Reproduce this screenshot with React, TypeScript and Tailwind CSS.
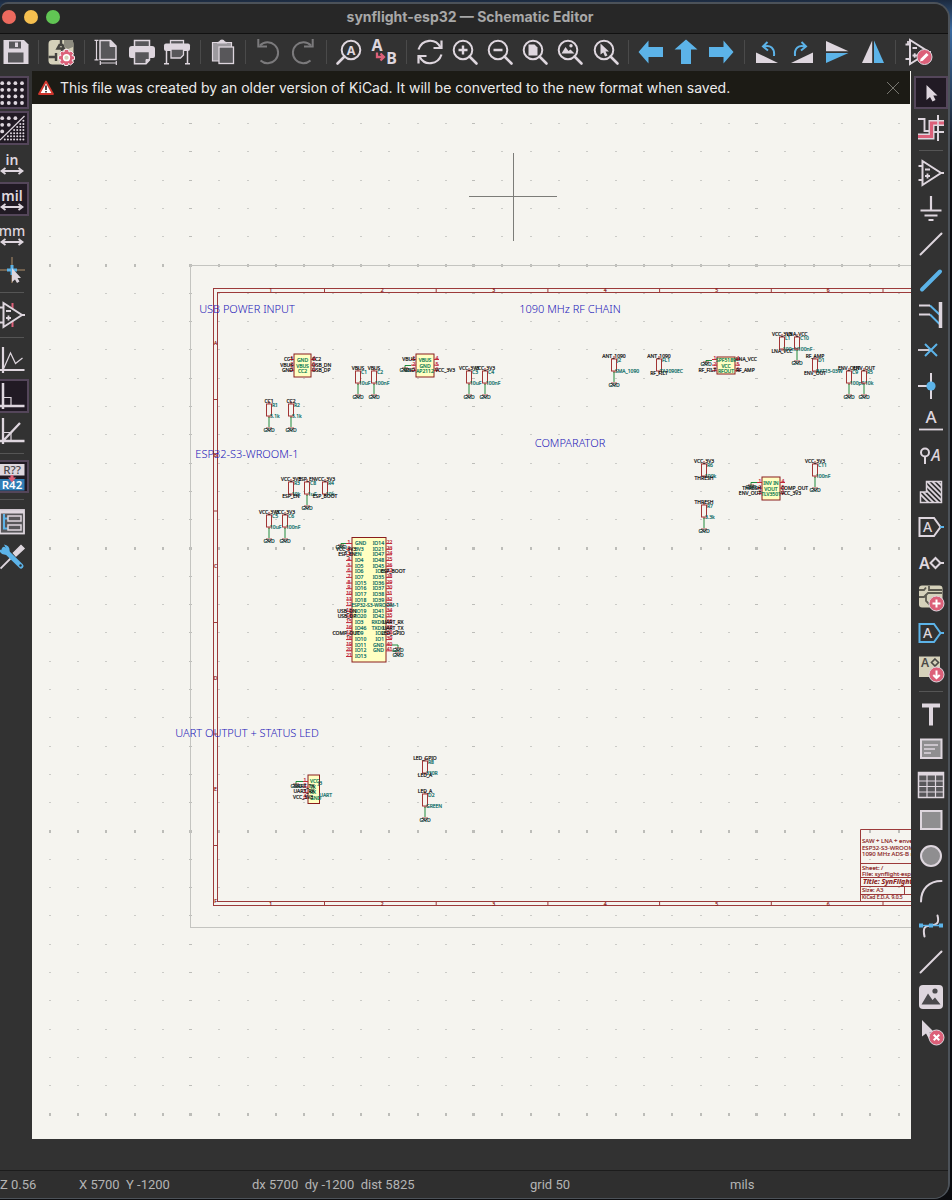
import { useState, type ReactNode } from 'react'

const LIGHT = '#ded6de'
const BLUE = '#5cb3e8'
const PINK = '#dc6079'
const GREY = '#58575a'
const CREAM = '#d5d1ba'

const MAROON = '#8a1c1c'
const FRAME = '#9c3a3a'
const TEAL = '#0b6b66'
const WIRE = '#1f8a3a'

type Tool = { label: string; icon: ReactNode } | 'sep'

function Icon({ children }: { children: ReactNode }) {
  return (
    <svg
      viewBox="0 0 26 26"
      className="size-[26px] shrink-0 overflow-visible"
      fill="none"
      stroke={LIGHT}
      strokeWidth="2"
      aria-hidden="true"
    >
      {children}
    </svg>
  )
}

function Glyph({
  x,
  y,
  size,
  children,
  color = LIGHT,
  weight = 500,
  italic = false,
}: {
  x: number
  y: number
  size: number
  children: ReactNode
  color?: string
  weight?: number
  italic?: boolean
}) {
  return (
    <text
      x={x}
      y={y}
      fontSize={size}
      fontWeight={weight}
      fontStyle={italic ? 'italic' : 'normal'}
      fill={color}
      stroke="none"
      textAnchor="middle"
      fontFamily='"Noto Sans", sans-serif'
    >
      {children}
    </text>
  )
}

function Magnifier({ children, flip = false }: { children: ReactNode; flip?: boolean }) {
  return (
    <Icon>
      <circle cx={flip ? 15 : 11} cy="11" r="9.3" />
      <path d={flip ? 'M8.5 17.5 1.5 24.5' : 'M17.5 17.5 24.5 24.5'} strokeWidth="2.6" strokeLinecap="round" />
      {children}
    </Icon>
  )
}

function PinkBadge({ children, x = 19, y = 19 }: { children: ReactNode; x?: number; y?: number }) {
  return (
    <g transform={`translate(${x} ${y})`}>
      <circle r="7.5" fill={PINK} stroke={LIGHT} strokeWidth="1" />
      {children}
    </g>
  )
}

const ARROW_LEFT = 'M0.5 13 10.5 1.5V8H25V18H10.5V24.5Z'

const TOP_TOOLS: Tool[] = [
  {
    label: 'Save',
    icon: (
      <Icon>
        <path d="M0.5 1H21L25.5 5.5V25H0.5Z" fill={LIGHT} stroke="none" />
        <path d="M6 2.5H18V9.5H6ZM5 13.500H20.500V23.5H5Z" fill={GREY} stroke="none" />
        <path d="M12 3.500H15V8H12Z" fill={LIGHT} stroke="none" />
      </Icon>
    ),
  },
  'sep',
  {
    label: 'Schematic Setup',
    icon: (
      <Icon>
        <rect x="0.500" y="1" width="25" height="24.500" rx="4" fill={CREAM} stroke="none" />
        <path d="M13 1V6.500M9.500 9.500H16L14.500 6H11.500ZM0.500 18H8M8 14V22M14 10V14" stroke="#454440" strokeWidth="2.400" />
        <path d="M16 1H25V8L20 10 16 8Z" fill="#8e8c80" stroke="none" />
        <path
          d="M16.500 10.500H20.500L21 13 23 12 25.500 14.500 24 16.500 26.500 17.500V20.500L24 21 25.500 23.500 22.500 26 20.500 24.500 20 26.500H16.500L16 24.500 14 25.500 11.500 23 13 21 10.500 20.500V17L13 16.500 12 14 14 12 16 13Z"
          fill={PINK}
          stroke="#f3e9ee"
          strokeWidth="1"
        />
        <circle cx="18.500" cy="18.700" r="2.900" fill={CREAM} stroke="#fff" strokeWidth="1.500" />
      </Icon>
    ),
  },
  'sep',
  {
    label: 'Page Settings',
    icon: (
      <Icon>
        <path d="M6 1.500H16.500L22 7V20.500H6Z" fill={GREY} strokeWidth="1.500" />
        <path d="M16 1.500V7.500H22" fill={LIGHT} strokeWidth="1" />
        <path d="M2.500 1V21M0.500 1.300H4.500M0.500 20.800H4.500M6 24H22.500M6.300 22V26M22.300 22V26" strokeWidth="1.200" />
      </Icon>
    ),
  },
  {
    label: 'Print',
    icon: (
      <Icon>
        <path d="M5.500 7V1.500H20.500V7" fill={GREY} strokeWidth="1.500" />
        <path d="M3 7H23Q26 7 26 10V17Q26 19 24 19H2Q0 19 0 17V10Q0 7 3 7Z" fill={LIGHT} stroke="none" />
        <path d="M5.500 12.500H20.500V21L17 24.800H5.500Z" fill={GREY} strokeWidth="1.500" />
        <path d="M20.500 20.500H17V24.500Z" fill={LIGHT} strokeWidth="1" />
      </Icon>
    ),
  },
  {
    label: 'Plot',
    icon: (
      <Icon>
        <rect x="6.500" y="1.500" width="13" height="4" fill={GREY} strokeWidth="1.300" />
        <rect x="0" y="4.500" width="26" height="7.500" rx="2" fill={LIGHT} stroke="none" />
        <path d="M7 10H19.500V16L16.500 19H7Z" fill={GREY} strokeWidth="1.300" />
        <path d="M2.500 12V24.500M23.500 12V24.500M0 24.700H5M21 24.700H26" strokeWidth="1.500" />
      </Icon>
    ),
  },
  'sep',
  {
    label: 'Paste',
    icon: (
      <Icon>
        <path d="M2.500 3.500H21.500V22H2.500Z" fill="#9c999e" strokeWidth="1.200" />
        <path d="M7 4.500Q7 2.500 9 2.500 10 0.500 12 0.500T15 2.500Q17 2.500 17 4.500Z" fill={LIGHT} stroke="none" />
        <rect x="9" y="8" width="14.500" height="16.500" fill={GREY} strokeWidth="1.300" />
      </Icon>
    ),
  },
  'sep',
  {
    label: 'Undo',
    icon: (
      <Icon>
        <path d="M5 6.500A10.500 10.500 0 1 1 5.500 21.500" stroke="#7b7a7c" strokeWidth="2" />
        <path d="M3.300 0V7.500H12" stroke="#7b7a7c" strokeWidth="2" />
      </Icon>
    ),
  },
  {
    label: 'Redo',
    icon: (
      <Icon>
        <path d="M21 6.500A10.500 10.500 0 1 0 20.500 21.500" stroke="#7b7a7c" strokeWidth="2" />
        <path d="M22.700 0V7.500H14" stroke="#7b7a7c" strokeWidth="2" />
      </Icon>
    ),
  },
  'sep',
  {
    label: 'Find',
    icon: (
      <Magnifier flip>
        <Glyph x={15} y={15.5} size={12.5} weight={700}>A</Glyph>
      </Magnifier>
    ),
  },
  {
    label: 'Find and Replace',
    icon: (
      <Icon>
        <Glyph x={6} y={12} size={16} weight={700}>A</Glyph>
        <Glyph x={20.5} y={25} size={16} weight={700}>B</Glyph>
        <path d="M6 13.500V18H12M9.500 14.500 13 18 9.500 21.500" stroke={PINK} strokeWidth="2.300" />
      </Icon>
    ),
  },
  'sep',
  {
    label: 'Refresh',
    icon: (
      <Icon>
        <path d="M1.500 10.500C5 0 18.500-1.500 23.500 8.500M24.500 15.500C21 26 7.500 27.500 2.500 17.500" strokeWidth="2.200" />
        <path d="M24.500 1.500V9H16.500M1.500 24.500V17H9.500" strokeWidth="2.200" />
      </Icon>
    ),
  },
  {
    label: 'Zoom In',
    icon: (
      <Magnifier>
        <path d="M11 6.500V15.500M6.500 11H15.500" strokeWidth="2.400" />
      </Magnifier>
    ),
  },
  {
    label: 'Zoom Out',
    icon: (
      <Magnifier>
        <path d="M6.500 11H15.500" strokeWidth="2.400" />
      </Magnifier>
    ),
  },
  {
    label: 'Zoom to Fit',
    icon: (
      <Magnifier>
        <path d="M6.500 5.500H12.500L15.500 8.500V16.500H6.500Z" fill={LIGHT} stroke="none" />
      </Magnifier>
    ),
  },
  {
    label: 'Zoom to Objects',
    icon: (
      <Magnifier>
        <path d="M4.500 14.500 8.500 8 11.500 12 13.500 10.500 17.500 14.500Z" fill={LIGHT} stroke="none" />
        <circle cx="14" cy="6.800" r="1.700" fill={LIGHT} stroke="none" />
      </Magnifier>
    ),
  },
  {
    label: 'Zoom to Selection',
    icon: (
      <Magnifier>
        <path d="M7.500 4.500 16 12.500H12.500L14.500 16.500 12 17.500 10.300 13.500 7.500 15.500Z" fill={LIGHT} stroke="none" />
      </Magnifier>
    ),
  },
  'sep',
  {
    label: 'Navigate Back',
    icon: (
      <Icon>
        <path d={ARROW_LEFT} fill={BLUE} stroke="none" />
      </Icon>
    ),
  },
  {
    label: 'Navigate Up',
    icon: (
      <Icon>
        <path d={ARROW_LEFT} transform="rotate(90 13 13)" fill={BLUE} stroke="none" />
      </Icon>
    ),
  },
  {
    label: 'Navigate Forward',
    icon: (
      <Icon>
        <path d={ARROW_LEFT} transform="rotate(180 13 13)" fill={BLUE} stroke="none" />
      </Icon>
    ),
  },
  'sep',
  {
    label: 'Rotate Counterclockwise',
    icon: (
      <Icon>
        <path d="M2 13.500V24H24Z" fill={LIGHT} stroke="none" />
        <path d="M20 17C21 9 16 5.500 10 7.500M13.500 3 9 7.500 14 11.500" stroke={BLUE} />
      </Icon>
    ),
  },
  {
    label: 'Rotate Clockwise',
    icon: (
      <Icon>
        <path d="M24 13.500V24H2Z" fill={LIGHT} stroke="none" />
        <path d="M6 17C5 9 10 5.500 16 7.500M12.500 3 17 7.500 12 11.500" stroke={BLUE} />
      </Icon>
    ),
  },
  {
    label: 'Mirror Vertically',
    icon: (
      <Icon>
        <path d="M2 2 24.500 12.200H2Z" fill={LIGHT} stroke="none" />
        <path d="M2 24 24.500 14H2Z" fill={BLUE} stroke="none" />
      </Icon>
    ),
  },
  {
    label: 'Mirror Horizontally',
    icon: (
      <Icon>
        <path d="M12.200 1.500V24H2Z" fill={LIGHT} stroke="none" />
        <path d="M14 1.500V24H24Z" fill={BLUE} stroke="none" />
      </Icon>
    ),
  },
  'sep',
  {
    label: 'Symbol Editor',
    icon: (
      <Icon>
        <path d="M5 1V25L24 13Z" />
        <path d="M0.500 5.500H5M0.500 20H5M3 5V2M7.500 9H12M7.500 16.500H12M9.700 14.300V18.700M24 13H26" strokeWidth="1.800" />
        <PinkBadge x={19.500} y={18}>
          <path d="M-3 3 3-3" stroke="#fff" strokeWidth="3" />
          <path d="M-4.500 4.500-3.800 1.800-1.800 3.800Z" fill="#fff" stroke="none" />
        </PinkBadge>
      </Icon>
    ),
  },
]

const UNIT_ARROW = 'M3 21H23M6.500 18 2.500 21 6.500 24M19.500 18 23.500 21 19.500 24'

const dots = (n: number, step: number, start: number) =>
  Array.from({ length: n * n }, (_, i) => [start + (i % n) * step, start + Math.floor(i / n) * step])

const LEFT_TOOLS: Tool[] = [
  {
    label: 'Show Grid',
    icon: (
      <Icon>
        {dots(4, 6.6, 3.2).map(([x, y]) => (
          <circle key={`${x}-${y}`} cx={x} cy={y} r="1.900" fill={LIGHT} stroke="none" />
        ))}
      </Icon>
    ),
  },
  {
    label: 'Grid Overrides',
    icon: (
      <Icon>
        {dots(3, 6.6, 3.2)
          .filter(([x, y]) => x + y < 20)
          .map(([x, y]) => (
            <circle key={`a${x}-${y}`} cx={x} cy={y} r="1.900" fill={LIGHT} stroke="none" />
          ))}
        {dots(7, 3.1, 5.800)
          .filter(([x, y]) => x + y > 28)
          .map(([x, y]) => (
            <circle key={`b${x}-${y}`} cx={x} cy={y} r="1" fill={LIGHT} stroke="none" />
          ))}
        <path d="M1 25 25.500 1" strokeWidth="1.200" />
      </Icon>
    ),
  },
  {
    label: 'Inches',
    icon: (
      <Icon>
        <Glyph x={13} y={14.5} size={14} weight={600}>in</Glyph>
        <path d={UNIT_ARROW} strokeWidth="1.800" />
      </Icon>
    ),
  },
  {
    label: 'Mils',
    icon: (
      <Icon>
        <Glyph x={13} y={14.5} size={14} weight={600}>mil</Glyph>
        <path d={UNIT_ARROW} strokeWidth="1.800" />
      </Icon>
    ),
  },
  {
    label: 'Millimeters',
    icon: (
      <Icon>
        <Glyph x={13} y={14.5} size={14}>mm</Glyph>
        <path d={UNIT_ARROW} strokeWidth="1.800" />
      </Icon>
    ),
  },
  {
    label: 'Full-Window Crosshairs',
    icon: (
      <Icon>
        <path d="M0 13H26M13 0V26" stroke="#b08f6a" strokeWidth="1" />
        <path d="M8 13H18M13 8V18" stroke={BLUE} strokeWidth="3" />
        <path d="M13 11V25L16 22.500 18 26 20.500 24.500 18.500 21H22Z" fill={LIGHT} stroke="none" />
      </Icon>
    ),
  },
  'sep',
  {
    label: 'Show Hidden Pins',
    icon: (
      <Icon>
        <path d="M13.500 1V25" stroke={PINK} strokeWidth="2" />
        <path d="M4.500 1V25L23 13Z" fill="#323232" />
        <path d="M0 5.500H4.500M0 20.500H4.500M22 13H26" />
        <path d="M7 9H12M7 16H12M9.500 13.500V18.500" strokeWidth="1.800" />
      </Icon>
    ),
  },
  'sep',
  {
    label: 'Free Angle Lines',
    icon: (
      <Icon>
        <path d="M4 0V26M0 23H25.500" strokeWidth="2.200" />
        <path d="M4 23 11.500 6 16.500 16.500 23.500 11" strokeWidth="1.200" />
      </Icon>
    ),
  },
  {
    label: '90 Degree Lines',
    icon: (
      <Icon>
        <path d="M4 0V26M0 23H25.500" strokeWidth="2.500" />
        <path d="M4 14.500H12V23" strokeWidth="1.200" />
      </Icon>
    ),
  },
  {
    label: '45 Degree Lines',
    icon: (
      <Icon>
        <path d="M4 0V26M0 23H25.500M4 23 21 5" strokeWidth="2.300" />
        <path d="M4 14.500H12V23" strokeWidth="1.200" />
      </Icon>
    ),
  },
  'sep',
  {
    label: 'Annotate Automatically',
    icon: (
      <Icon>
        <rect x="0" y="0" width="25.500" height="11.500" fill={LIGHT} stroke="none" />
        <Glyph x={13} y={10} size={11.500} color="#4b484b">R??</Glyph>
        <rect x="0" y="15" width="25.500" height="11.500" fill="#2f7db5" stroke="none" />
        <Glyph x={13} y={25} size={11.500} color="#fff" weight={600}>R42</Glyph>
        <path d="M13 11V14" stroke={PINK} strokeWidth="3" />
        <path d="M9 13.500H17L13 18.500Z" fill={PINK} stroke="none" />
      </Icon>
    ),
  },
  'sep',
  {
    label: 'Hierarchy Navigator',
    icon: (
      <Icon>
        <rect x="1" y="1" width="24" height="23.500" fill={GREY} strokeWidth="1.800" />
        <path d="M1 3H25" strokeWidth="3" />
        <path d="M5 5V19.500H9M5 9.500H9" stroke={BLUE} />
        <rect x="9" y="7" width="13" height="5" strokeWidth="1.500" />
        <rect x="9" y="16" width="13" height="5" strokeWidth="1.500" />
      </Icon>
    ),
  },
  {
    label: 'Properties Manager',
    icon: (
      <Icon>
        <path d="M1.500 24.500 14 12" strokeWidth="1.800" />
        <path d="M14.500 9 22 1.500 25 4.500 17 12Z" fill={LIGHT} strokeWidth="1.500" />
        <path d="M5 5.500 22 22" stroke={BLUE} strokeWidth="5" strokeLinecap="round" />
        <path d="M0 5.500Q1.500 12 8.500 10.500L10.500 8.500Q11.500 1.500 5 0.500L7 4.500 4.500 6.500Z" fill={BLUE} stroke="none" />
        <circle cx="21.500" cy="21.500" r="1.200" fill="#2f2f2f" stroke="none" />
      </Icon>
    ),
  },
]

const TAG = 'M1.500 4V22H16L22.500 13 16 4Z'

const RIGHT_TOOLS: Tool[] = [
  {
    label: 'Select Item(s)',
    icon: (
      <Icon>
        <path d="M8.500 5V20L12 17 14.500 21.500 17.500 20 15.300 15.500H19.500Z" fill={LIGHT} stroke="none" />
      </Icon>
    ),
  },
  {
    label: 'Highlight Nets',
    icon: (
      <Icon>
        <path d="M0 4H6.500V16H12M20 0V26M16 17H26" strokeWidth="1.900" />
        <path d="M0 21.500H13.500V8H26" strokeWidth="6" />
        <path d="M0 21.500H13.500V8H26" stroke={PINK} strokeWidth="3.200" />
        <path d="M20 0V26" strokeWidth="1.600" />
      </Icon>
    ),
  },
  'sep',
  {
    label: 'Place Symbols',
    icon: (
      <Icon>
        <path d="M4.500 1V25L23 13ZM0.500 6H4.500M0.500 20H4.500M22 13H26" />
        <path d="M7 9.500H12M7 16H12M9.500 13.500V18.500" strokeWidth="1.800" />
      </Icon>
    ),
  },
  {
    label: 'Place Power Symbols',
    icon: (
      <Icon>
        <path d="M13 0V14M2.500 14.500H23.500M6.500 19.500H19.500M10.500 24H15.500" strokeWidth="2.200" />
      </Icon>
    ),
  },
  {
    label: 'Draw Wires',
    icon: (
      <Icon>
        <path d="M2.500 23.500 23.500 2.500" strokeLinecap="round" />
      </Icon>
    ),
  },
  {
    label: 'Draw Buses',
    icon: (
      <Icon>
        <path d="M4 22.500 22 4.500" stroke={BLUE} strokeWidth="4" strokeLinecap="round" />
      </Icon>
    ),
  },
  {
    label: 'Place Wire to Bus Entries',
    icon: (
      <Icon>
        <path d="M12 3.500 22 13M12 12.500 22 22.500" stroke={BLUE} />
        <path d="M1 3.500H12M1 12.500H12" strokeWidth="1.800" />
        <path d="M22.500 0V26" strokeWidth="3.500" />
      </Icon>
    ),
  },
  {
    label: 'Place No Connect Flags',
    icon: (
      <Icon>
        <path d="M0 13H13" strokeWidth="1.800" />
        <path d="M7 7 19 19M19 7 7 19" stroke={BLUE} />
      </Icon>
    ),
  },
  {
    label: 'Place Junctions',
    icon: (
      <Icon>
        <path d="M0 13H13M13 0V26" />
        <circle cx="13" cy="13" r="4.600" fill={BLUE} stroke="none" />
      </Icon>
    ),
  },
  {
    label: 'Place Net Labels',
    icon: (
      <Icon>
        <Glyph x={13} y={15} size={17} weight={500}>A</Glyph>
        <path d="M1 21.500H25" strokeWidth="1.800" />
      </Icon>
    ),
  },
  {
    label: 'Place Directive Labels',
    icon: (
      <Icon>
        <circle cx="7" cy="9.500" r="4" />
        <path d="M7 13.500V21" />
        <Glyph x={18} y={18} size={16} italic>A</Glyph>
      </Icon>
    ),
  },
  {
    label: 'Draw Rule Areas',
    icon: (
      <Icon>
        <clipPath id="rule-area">
          <path d="M2 13H8.500V2H23.500V24H2Z" />
        </clipPath>
        <path
          d="M-6 2 20 28M-1 2 25 28M4 2 30 28M9 2 35 28M14 2 40 28M-11 2 15 28M19 2 30 13"
          clipPath="url(#rule-area)"
          strokeWidth="1.800"
        />
        <path d="M2.500 13H8.500V2.500H23.500V23.500H2.500Z" strokeWidth="1.500" />
      </Icon>
    ),
  },
  {
    label: 'Place Global Labels',
    icon: (
      <Icon>
        <path d={TAG} />
        <path d="M22 13H26" stroke={BLUE} />
        <Glyph x={9.500} y={18} size={14}>A</Glyph>
      </Icon>
    ),
  },
  {
    label: 'Place Hierarchical Labels',
    icon: (
      <Icon>
        <Glyph x={6.500} y={18.5} size={16} weight={600}>A</Glyph>
        <path d="M17.500 8 22.500 13 17.500 18 12.500 13ZM22.500 13H26" />
      </Icon>
    ),
  },
  {
    label: 'Draw Hierarchical Sheets',
    icon: (
      <Icon>
        <rect x="1" y="0.500" width="23.500" height="22" rx="3" fill={CREAM} stroke="none" />
        <path d="M1 5H6L8 2.500M11 1V5H24M1 12H6L10 8H24M8 9V16L12 20" stroke="#5c5a50" strokeWidth="1.800" />
        <PinkBadge x={18.500} y={18.500}>
          <path d="M0-4V4M-4 0H4" stroke="#fff" strokeWidth="2" />
        </PinkBadge>
      </Icon>
    ),
  },
  {
    label: 'Place Sheet Pins',
    icon: (
      <Icon>
        <path d={TAG} stroke={BLUE} />
        <path d="M22 13H26" stroke={BLUE} />
        <Glyph x={9.500} y={18} size={14}>A</Glyph>
      </Icon>
    ),
  },
  {
    label: 'Sync Sheet Pins',
    icon: (
      <Icon>
        <path d="M1 0.500H22V21H1Z" fill={CREAM} stroke="none" />
        <Glyph x={7} y={11} size={12} color="#4a4945" weight={600}>A</Glyph>
        <path d="M17 3 20.500 6.500 17 10 13.500 6.500Z" stroke="#4a4945" strokeWidth="1.600" />
        <PinkBadge x={18.500} y={18.500}>
          <path d="M0-4V3.500M-3.200 0.500 0 3.700 3.200 0.500" stroke="#fff" strokeWidth="2" />
        </PinkBadge>
      </Icon>
    ),
  },
  'sep',
  {
    label: 'Draw Text',
    icon: (
      <Icon>
        <path d="M4 4.500H22M13 3V24.500" strokeWidth="4" />
      </Icon>
    ),
  },
  {
    label: 'Draw Text Boxes',
    icon: (
      <Icon>
        <rect x="3" y="3.500" width="20.500" height="18.500" fill="#8f8e90" />
        <path d="M6 9H20M6 13H17M6 17H13" strokeWidth="1.500" />
      </Icon>
    ),
  },
  {
    label: 'Draw Tables',
    icon: (
      <Icon>
        <rect x="0.500" y="0.500" width="25" height="25" fill={GREY} strokeWidth="1.500" />
        <path d="M0 2H26" strokeWidth="3" />
        <path d="M9 3V26M17.500 3V26M0 9H26M0 14.500H26M0 20H26" strokeWidth="1.200" />
      </Icon>
    ),
  },
  {
    label: 'Draw Rectangles',
    icon: (
      <Icon>
        <rect x="3" y="4" width="20.500" height="18" fill="#8f8e90" />
      </Icon>
    ),
  },
  {
    label: 'Draw Circles',
    icon: (
      <Icon>
        <circle cx="13" cy="13" r="10" fill="#8f8e90" />
      </Icon>
    ),
  },
  {
    label: 'Draw Arcs',
    icon: (
      <Icon>
        <path d="M3 23.500C3 11 11 3 23.500 3" strokeLinecap="round" />
      </Icon>
    ),
  },
  {
    label: 'Draw Bezier Curve',
    icon: (
      <Icon>
        <path d="M6.500 23.500C4 12 9 13.500 13 12.500S22 12 19.500 2.500" strokeLinecap="round" />
        <path d="M2.500 12.500H23.500" stroke={BLUE} strokeWidth="1.500" />
        <path d="M1 10.500H5V14.500H1ZM11 10.500H15V14.500H11ZM21 10.500H25V14.500H21Z" fill={BLUE} stroke="none" />
      </Icon>
    ),
  },
  {
    label: 'Draw Lines',
    icon: (
      <Icon>
        <path d="M2.500 23.500 23.500 2.500" strokeLinecap="round" />
      </Icon>
    ),
  },
  {
    label: 'Place Images',
    icon: (
      <Icon>
        <rect x="1" y="1" width="24" height="24" rx="4" fill={LIGHT} stroke="none" />
        <path d="M3.500 20.500 10 9.500 14.500 16 17 13.500 22.500 20.500Z" fill="#4a494c" stroke="none" />
        <circle cx="17" cy="7" r="2.600" fill="#4a494c" stroke="none" />
      </Icon>
    ),
  },
  {
    label: 'Delete',
    icon: (
      <Icon>
        <path d="M4 1V17.500L8 14.500 11 20 14 18.500 11.500 13.500H16.500Z" fill={LIGHT} stroke="none" />
        <PinkBadge x={18.500} y={18.500}>
          <path d="M-2.800-2.800 2.800 2.800M2.800-2.800-2.800 2.800" stroke="#fff" strokeWidth="2" />
        </PinkBadge>
      </Icon>
    ),
  },
]

function SideButton({
  label,
  icon,
  active,
  onClick,
}: {
  label: string
  icon: ReactNode
  active: boolean
  onClick: () => void
}) {
  return (
    <button
      type="button"
      aria-label={label}
      aria-pressed={active}
      onClick={onClick}
      className="flex min-h-0 w-[34px] flex-1 items-center justify-center py-px"
    >
      <span
        className={`flex size-full items-center justify-center border-2 ${
          active ? 'border-[#54465a] bg-[#211a24]' : 'border-transparent'
        }`}
      >
        {icon}
      </span>
    </button>
  )
}

function SideSeparator() {
  return (
    <div className="flex h-[10px] w-6 shrink-0 items-center">
      <div className="h-px w-full bg-[#555555]" />
    </div>
  )
}

// two-pin part: vertical body with a net on top and a net or ground below
type Part = { x: number; y: number; net: string; name: string; value: string; below?: string }

const PARTS: Part[] = [
  { x: 269, y: 404, net: 'CC1', name: 'R1', value: '5.1k' },
  { x: 291, y: 404, net: 'CC2', name: 'R2', value: '5.1k' },
  { x: 358, y: 371, net: 'VBUS', name: 'C1', value: '10uF' },
  { x: 374, y: 371, net: 'VBUS', name: 'C2', value: '100nF' },
  { x: 469, y: 371, net: 'VCC_3V3', name: 'C3', value: '10uF' },
  { x: 485, y: 371, net: 'VCC_3V3', name: 'C4', value: '100nF' },
  { x: 291, y: 482, net: 'VCC_3V3', name: 'R3', value: '10k', below: 'ESP_EN' },
  { x: 307, y: 482, net: 'ESP_EN', name: 'C8', value: '1uF' },
  { x: 325, y: 482, net: 'VCC_3V3', name: 'R4', value: '10k', below: 'ESP_BOOT' },
  { x: 269, y: 515, net: 'VCC_3V3', name: 'C5', value: '10uF' },
  { x: 285, y: 515, net: 'VCC_3V3', name: 'C6', value: '100nF' },
  { x: 614, y: 359, net: 'ANT_1090', name: 'J2', value: 'SMA_1090' },
  { x: 659, y: 359, net: 'ANT_1090', name: 'FL1', value: 'TA1090EC', below: 'RF_FILT' },
  { x: 782, y: 337, net: 'VCC_3V3', name: 'L1', value: '100nH', below: 'LNA_VCC' },
  { x: 797, y: 337, net: 'LNA_VCC', name: 'C10', value: '100nF' },
  { x: 815, y: 359, net: 'RF_AMP', name: 'D1', value: 'BAT15-03W', below: 'ENV_OUT' },
  { x: 849, y: 371, net: 'ENV_OUT', name: 'C9', value: '100pF' },
  { x: 864, y: 371, net: 'ENV_OUT', name: 'R5', value: '10k' },
  { x: 704, y: 464, net: 'VCC_3V3', name: 'R6', value: '100k', below: 'THRESH' },
  { x: 704, y: 505, net: 'THRESH', name: 'R7', value: '3.3k' },
  { x: 815, y: 464, net: 'VCC_3V3', name: 'C11', value: '100nF' },
  { x: 425, y: 761, net: 'LED_GPIO', name: 'R8', value: '330R', below: 'LED_A' },
  { x: 425, y: 794, net: 'LED_A', name: 'D2', value: 'GREEN' },
]

const SECTIONS = [
  { x: 247, y: 313, text: 'USB POWER INPUT' },
  { x: 570, y: 313, text: '1090 MHz RF CHAIN' },
  { x: 247, y: 458, text: 'ESP32-S3-WROOM-1' },
  { x: 570, y: 447, text: 'COMPARATOR' },
  { x: 247, y: 737, text: 'UART OUTPUT + STATUS LED' },
]

const ESP_LEFT = 'GND 3V3 EN IO4 IO5 IO6 IO7 IO15 IO16 IO17 IO18 IO8 IO19 IO20 IO3 IO46 IO9 IO10 IO11 IO12 IO13'.split(' ')
const ESP_RIGHT = 'IO14 IO21 IO47 IO48 IO45 IO0 IO35 IO36 IO37 IO38 IO39 IO40 IO41 IO42 RXD0 TXD0 IO2 IO1 GND GND'.split(' ')
const ESP_NETS = [
  { x: 346, row: 1, text: 'VCC_3V3' },
  { x: 347, row: 2, text: 'ESP_EN' },
  { x: 393, row: 5, text: 'ESP_BOOT' },
  { x: 347, row: 12, text: 'USB_DN' },
  { x: 347, row: 13, text: 'USB_DP' },
  { x: 393, row: 14, text: 'UART_RX' },
  { x: 393, row: 15, text: 'UART_TX' },
  { x: 346, row: 16, text: 'COMP_OUT' },
  { x: 393, row: 16, text: 'LED_GPIO' },
]

// multi-pin blocks with rows of [left net, inner text, right net]
const BLOCKS = [
  { x: 294, y: 354, w: 17, h: 23, first: 361, rows: [['CC1', 'GND', 'CC2'], ['VBUS', 'VBUS', 'USB_DN'], ['GND', 'CC2', 'USB_DP']] },
  { x: 416, y: 354, w: 18, h: 23, first: 361, rows: [['VBUS', 'VBUS', ''], ['', 'GND', ''], ['GND', 'AP2112', 'VCC_3V3']] },
  { x: 717, y: 357, w: 18, h: 17, first: 361, rows: [['', 'SPF5189', 'LNA_VCC'], ['', 'VCC', ''], ['RF_FILT', 'RFOUT', 'RF_AMP']] },
  { x: 762, y: 477, w: 18, h: 23, first: 484, rows: [['', 'INV IN', ''], ['THRESH', 'VOUT', 'COMP_OUT'], ['ENV_OUT', 'TLV3501', 'VCC_3V3']] },
]

function Tiny({
  x,
  y,
  children,
  fill = '#111111',
  anchor = 'middle',
}: {
  x: number
  y: number
  children: ReactNode
  fill?: string
  anchor?: 'start' | 'middle' | 'end'
}) {
  return (
    <text x={x} y={y} fill={fill} stroke={fill} strokeWidth="0.200" fontSize="5" textAnchor={anchor}>
      {children}
    </text>
  )
}

function Ground({ x, y }: { x: number; y: number }) {
  return (
    <g>
      <path d={`M${x - 3} ${y + 1}H${x + 3}L${x} ${y + 4}Z`} fill="none" stroke={MAROON} strokeWidth="0.800" />
      <Tiny x={x} y={y + 5} fill="#0d4642">GND</Tiny>
    </g>
  )
}

function TwoPin({ x, y, net, name, value, below }: Part) {
  return (
    <g>
      <rect x={x - 2.5} y={y} width="5" height="12" fill="none" stroke="#a23434" />
      <path d={`M${x} ${y - 3}V${y}M${x} ${y + 12}V${y + 14}`} stroke="#a23434" />
      <Tiny x={x} y={y - 1}>{net}</Tiny>
      <Tiny x={x + 3} y={y + 3} fill={TEAL} anchor="start">{name}</Tiny>
      <Tiny x={x + 1} y={y + 14} fill={TEAL} anchor="start">{value}</Tiny>
      {below ? (
        <Tiny x={x} y={y + 16}>{below}</Tiny>
      ) : (
        <>
          <path d={`M${x} ${y + 13}V${y + 23}`} stroke={WIRE} />
          <Ground x={x} y={y + 23} />
        </>
      )}
    </g>
  )
}

function Grid() {
  const step = 28.3
  const columns = Array.from({ length: 60 }, (_, i) => i - 6)
  const rows = Array.from({ length: 50 }, (_, i) => i - 6)
  return (
    <g>
      {rows.map((row) =>
        columns.map((column) => {
          const majorRow = row % 10 === 0
          const majorColumn = column % 10 === 0
          const width = majorColumn ? 3 : 1
          const height = majorRow ? 3 : 1
          return (
            <rect
              key={`${row}/${column}`}
              x={Math.round(190.6 + column * step - width / 2)}
              y={Math.round(265 + row * step - height / 2)}
              width={majorColumn ? 3 : 2}
              height={majorRow ? 3 : 1}
              fill={majorRow || majorColumn ? '#bdbdb9' : '#cbcbc7'}
            />
          )
        }),
      )}
    </g>
  )
}

function Sheet() {
  const marks = [0, 1, 2, 3, 4, 5]
  return (
    <g fill="none" stroke={FRAME} strokeWidth="1">
      <rect x="190.500" y="265.500" width="937" height="662" stroke="#c4c4c0" strokeWidth="1" />
      <rect x="213.500" y="288.500" width="892" height="617" />
      <rect x="217.500" y="292.500" width="884" height="609" />
      {marks.map((i) => (
        <g key={i}>
          <path d={`M${324.500 + i * 111.7} 288.500V292.500M${324.500 + i * 111.7} 901.500V905.500`} />
          <Tiny x={270.700 + i * 111.5} y={292} fill={MAROON}>{i + 1}</Tiny>
          <Tiny x={270.700 + i * 111.5} y={905.5} fill={MAROON}>{i + 1}</Tiny>
          {i < 5 && <path d={`M213.500 ${399.500 + i * 111.5}H217.500`} />}
          <Tiny x={215.500} y={345 + i * 111.5} fill={MAROON}>{'ABCDEF'[i]}</Tiny>
        </g>
      ))}
      <path d="M860.500 901.500V829.500H1101M860 863.500H1101M860 877.500H1101M860 886.500H1101M860 894.500H1101M904.500 886.500V894.500" />
      <g fill={MAROON} stroke={MAROON} strokeWidth="0.150" fontSize="6">
        <text x="862" y="843">SAW + LNA + envelope detector</text>
        <text x="862" y="850">ESP32-S3-WROOM-1 module</text>
        <text x="862" y="856">1090 MHz ADS-B receiver</text>
        <text x="862" y="870">Sheet: /</text>
        <text x="862" y="876">File: synflight-esp32.kicad_sch</text>
        <text x="863" y="884" fontSize="7" fontWeight="700" fontStyle="italic">Title: SynFlight ESP32</text>
        <text x="862" y="892">Size: A3</text>
        <text x="862" y="899" fontSize="5">KiCad E.D.A. 9.0.5</text>
      </g>
    </g>
  )
}

function EspModule() {
  const rowY = (row: number) => 545 + row * 5.65
  return (
    <g>
      <rect x="352" y="537.500" width="34" height="124.500" fill="#ffffc2" stroke={MAROON} />
      {ESP_LEFT.map((pin, row) => (
        <g key={pin}>
          <path d={`M346 ${rowY(row) - 1.500}H352`} stroke="#c22a3a" />
          <Tiny x={349} y={rowY(row) - 1} fill="#c22a3a">{row + 1}</Tiny>
          {row !== 11 && <Tiny x={355} y={rowY(row)} fill={TEAL} anchor="start">{pin}</Tiny>}
        </g>
      ))}
      {ESP_RIGHT.map((pin, row) => (
        <g key={row}>
          <path d={`M386 ${rowY(row) - 1.500}H392`} stroke="#c22a3a" />
          <Tiny x={389.500} y={rowY(row) - 1} fill="#c22a3a">{row + 22}</Tiny>
          {row !== 11 && <Tiny x={384} y={rowY(row)} fill={TEAL} anchor="end">{pin}</Tiny>}
        </g>
      ))}
      <Tiny x={375} y={607} fill={TEAL}>ESP32-S3-WROOM-1</Tiny>
      {ESP_NETS.map((net) => (
        <Tiny key={`${net.text}${net.row}`} x={net.x} y={rowY(net.row)}>{net.text}</Tiny>
      ))}
      <path d="M346 543.500H341V547M392 645H398V648M392 651H398" stroke={WIRE} fill="none" />
      <Ground x={341} y={544} />
      <Ground x={398} y={647} />
      <Ground x={398} y={652} />
    </g>
  )
}

function Schematic() {
  return (
    <svg
      className="absolute inset-0 size-full"
      fontFamily='"Noto Sans", sans-serif'
      role="img"
      aria-label="synflight-esp32 schematic"
    >
      <g transform="translate(-32 -104)">
        <Grid />
        <Sheet />
        <path d="M469 196.500H557M513.500 153V241" stroke="#7c7c78" strokeWidth="1" />
        {SECTIONS.map((section) => (
          <text
            key={section.text}
            x={section.x}
            y={section.y}
            fontSize="11"
            fontWeight="300"
            fill="#2416b8"
            textAnchor="middle"
          >
            {section.text}
          </text>
        ))}
        {BLOCKS.map((block) => (
          <g key={`${block.x}/${block.y}`}>
            <rect x={block.x} y={block.y} width={block.w} height={block.h} fill="#ffffc2" stroke={MAROON} />
            {block.rows.map(([left, inner, right], i) => {
              const y = block.first + i * 5.6
              return (
                <g key={i}>
                  <path
                    d={`M${block.x - 5} ${y - 1.5}H${block.x}M${block.x + block.w} ${y - 1.5}h5`}
                    stroke="#c22a3a"
                  />
                  <Tiny x={block.x - 2} y={y - 1} fill="#c22a3a">{i + 1}</Tiny>
                  <Tiny x={block.x + block.w + 3} y={y - 1} fill="#c22a3a">{i + 4}</Tiny>
                  <Tiny x={block.x + block.w / 2} y={y + 1} fill="#08794f">{inner}</Tiny>
                  <Tiny x={block.x - 1} y={y} anchor="end">{left}</Tiny>
                  <Tiny x={block.x + block.w + 1} y={y} anchor="start">{right}</Tiny>
                </g>
              )
            })}
          </g>
        ))}
        <path d="M411 365.500H405V370M712 360.500H706V363M757 482.500H751V487M303 781.500H296V785" stroke={WIRE} fill="none" />
        <Ground x={405} y={367} />
        <Ground x={706} y={361} />
        <Ground x={751} y={484} />
        <rect x="308" y="775" width="11.500" height="28.500" fill="#ffffc2" stroke={MAROON} />
        {['VCC', 'TX', 'RX', 'GND'].map((pin, i) => (
          <g key={pin}>
            <path d={`M303 ${781.500 + i * 5.6}h5`} stroke="#c22a3a" />
            <Tiny x={305} y={781.5 + i * 5.6} fill="#c22a3a">{i + 1}</Tiny>
            <Tiny x={310} y={783 + i * 5.6} fill="#08794f" anchor="start">{pin}</Tiny>
          </g>
        ))}
        <Tiny x={320} y={785} fill={TEAL}>J3</Tiny>
        <Tiny x={332} y={797} fill={TEAL} anchor="end">UART</Tiny>
        <Tiny x={304} y={788}>UART_TX</Tiny>
        <Tiny x={304} y={793}>UART_RX</Tiny>
        <Tiny x={303} y={799}>VCC_3V3</Tiny>
        <Ground x={296} y={783} />
        {PARTS.map((part) => (
          <TwoPin key={`${part.x}/${part.y}`} {...part} />
        ))}
        <EspModule />
      </g>
    </svg>
  )
}

export default function App() {
  const [toggles, setToggles] = useState([
    'Show Grid',
    'Grid Overrides',
    'Mils',
    '90 Degree Lines',
    'Annotate Automatically',
  ])
  const [tool, setTool] = useState('Select Item(s)')
  const [showNotice, setShowNotice] = useState(true)

  const toggle = (label: string) =>
    setToggles((current) =>
      current.includes(label) ? current.filter((item) => item !== label) : [...current, label],
    )

  return (
    <div className="flex h-screen flex-col overflow-hidden bg-[linear-gradient(#1c2a3f_0,#3a6aa0_30px,#23364f_110px,#0c0d10_160px)] pt-[2px] pr-[2px] pb-px font-[Inter,sans-serif]">
      <div className="flex min-h-0 flex-1 flex-col overflow-hidden rounded-tl-lg rounded-r-2xl border-t-2 border-r-2 border-b border-[#4c5259] bg-[#323232]">
        {/* title bar */}
        <header className="relative flex h-[30px] shrink-0 items-center justify-center border-b border-[#111111] bg-[#272727] pb-[3px] pr-2">
          <div className="absolute left-[2px] flex gap-2">
            <button type="button" aria-label="Close" className="size-[14px] rounded-full bg-[#ed6a5e]" />
            <button type="button" aria-label="Minimize" className="size-[14px] rounded-full bg-[#f5bf4f]" />
            <button type="button" aria-label="Zoom window" className="size-[14px] rounded-full bg-[#61c554]" />
          </div>
          <h1 className="text-[14px] font-bold leading-5 text-[#a8a8a8]">synflight-esp32 — Schematic Editor</h1>
        </header>

        {/* main toolbar */}
        <div role="toolbar" aria-label="Main" className="flex h-[37px] shrink-0 items-center justify-between pb-[2px] pl-[3px] pr-[17px]">
          {TOP_TOOLS.map((item, index) =>
            item === 'sep' ? (
              <div key={index} className="h-6 w-px shrink-0 bg-[#4a4a4a]" />
            ) : (
              <button key={item.label} type="button" aria-label={item.label} className="shrink-0">
                {item.icon}
              </button>
            ),
          )}
        </div>

        <div className="flex min-h-0 flex-1">
          {/* display options */}
          <div role="toolbar" aria-label="Display options" className="w-8 shrink-0 pt-1">
            <div className="-ml-[5px] flex h-[500px] flex-col items-center pr-1">
              {LEFT_TOOLS.map((item, index) =>
                item === 'sep' ? (
                  <SideSeparator key={index} />
                ) : (
                  <SideButton
                    key={item.label}
                    label={item.label}
                    icon={item.icon}
                    active={toggles.includes(item.label)}
                    onClick={() => toggle(item.label)}
                  />
                ),
              )}
            </div>
          </div>

          <main className="flex min-w-0 flex-1 flex-col pb-[31px]">
            {showNotice && (
              <div className="flex shrink-0 bg-[#f5f4ef] pr-px">
                <div role="alert" className="flex h-[33px] min-w-0 flex-1 items-center bg-[#1c1b15] pl-[6px] pr-[10px]">
                  <svg viewBox="0 0 16 16" className="size-4 shrink-0" aria-hidden="true">
                    <path d="M8 1.500 15 14H1Z" fill="#fff" stroke="#d0352c" strokeWidth="1.800" strokeLinejoin="round" />
                    <path d="M8 5.500V10M8 11V12.500" stroke="#111111" strokeWidth="1.500" />
                  </svg>
                  <p className="flex-1 truncate pl-[6px] text-[14px] leading-5 text-[#ececec]">
                    This file was created by an older version of KiCad. It will be converted to the new format when saved.
                  </p>
                  <button type="button" aria-label="Dismiss" onClick={() => setShowNotice(false)} className="shrink-0">
                    <svg viewBox="0 0 14 14" className="size-[14px]" stroke="#77766f" aria-hidden="true">
                      <path d="M1 1 13 13M13 1 1 13" />
                    </svg>
                  </button>
                </div>
              </div>
            )}
            <div className="relative min-h-0 flex-1 overflow-hidden bg-[#f5f4ef]">
              <Schematic />
            </div>
          </main>

          {/* drawing tools */}
          <div role="toolbar" aria-label="Drawing tools" className="w-[37px] shrink-0 pl-[3px] pt-1">
            <div className="flex h-[975px] flex-col items-center">
              {RIGHT_TOOLS.map((item, index) =>
                item === 'sep' ? (
                  <SideSeparator key={index} />
                ) : (
                  <SideButton
                    key={item.label}
                    label={item.label}
                    icon={item.icon}
                    active={tool === item.label}
                    onClick={() => setTool(item.label)}
                  />
                ),
              )}
            </div>
          </div>
        </div>

        <footer className="grid h-[28px] shrink-0 grid-cols-[79px_173px_278px_200px_1fr] items-center border-t border-[#1c1c1c] bg-[#2f2f2f] font-[Roboto,sans-serif] text-[13px] leading-5 whitespace-pre text-[#b4b4b4]">
          <span>Z 0.56</span>
          <span>X 5700  Y -1200</span>
          <span>dx 5700  dy -1200  dist 5825</span>
          <span>grid 50</span>
          <span>mils</span>
        </footer>
      </div>
    </div>
  )
}
